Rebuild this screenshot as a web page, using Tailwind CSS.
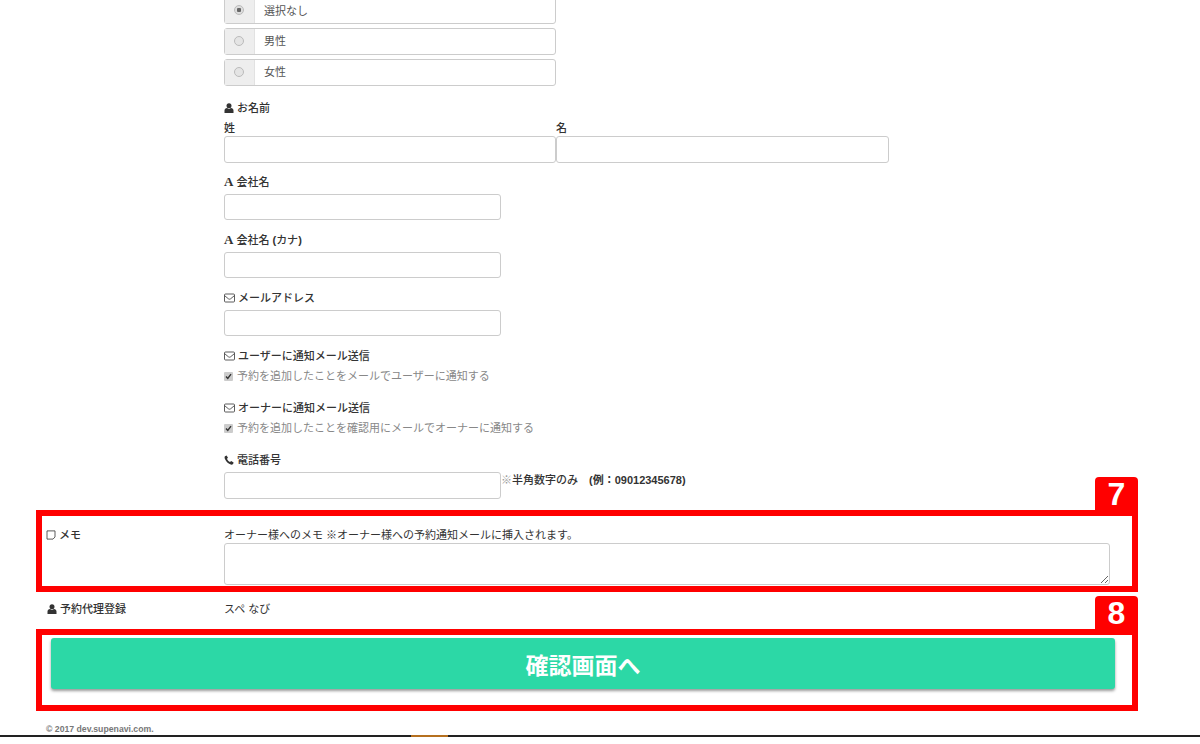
<!DOCTYPE html>
<html lang="ja">
<head>
    <meta charset="UTF-8">
    <meta name="viewport" content="width=device-width, initial-scale=1.0">
    <title>予約登録</title>
    <script src="https://cdn.jsdelivr.net/npm/@tailwindcss/browser@4"></script>
</head>
<body class="bg-white">
<div class="h-[744px] overflow-hidden flex flex-col text-[11px] leading-[14px] text-[#333] font-['Liberation_Sans','Noto_Sans_CJK_JP',sans-serif]">

    <!-- 予約フォーム上部 -->
    <div class="pl-[224px] -mt-[3px]">
        <div class="w-[332px] flex flex-col gap-1">
            <label class="flex h-[27px] border border-[#ccc] rounded-[3px]">
                <span class="w-[30px] pr-[1px] pb-[2px] flex items-center justify-center bg-[#eee] border-r border-[#e2e2e2]"><input type="radio" name="sex" checked disabled class="appearance-none w-[10px] h-[10px] rounded-full border border-[#bbb] bg-[radial-gradient(circle,#666_35%,#ddd_45%)]"></span>
                <span class="pl-[9px] flex items-center text-[#555]">選択なし</span>
            </label>
            <label class="flex h-[27px] border border-[#ccc] rounded-[3px]">
                <span class="w-[30px] pr-[1px] pb-[2px] flex items-center justify-center bg-[#eee] border-r border-[#e2e2e2]"><input type="radio" name="sex" disabled class="appearance-none w-[10px] h-[10px] rounded-full border border-[#bbb] bg-[#e4e4e4]"></span>
                <span class="pl-[9px] pb-[2px] flex items-center text-[#555]">男性</span>
            </label>
            <label class="flex h-[27px] border border-[#ccc] rounded-[3px]">
                <span class="w-[30px] pr-[1px] pb-[2px] flex items-center justify-center bg-[#eee] border-r border-[#e2e2e2]"><input type="radio" name="sex" disabled class="appearance-none w-[10px] h-[10px] rounded-full border border-[#bbb] bg-[#e4e4e4]"></span>
                <span class="pl-[9px] pb-[2px] flex items-center text-[#555]">女性</span>
            </label>
        </div>

        <div class="mt-[15px] font-medium flex items-center gap-[3px] h-[14px]">
            <svg class="w-[10px] h-[10px]" viewBox="0 0 10 10" fill="#333"><circle cx="5" cy="2.8" r="2.5"/><path d="M0.5 10V7.6C0.5 6 1.6 5 3 5L5 6 7 5C8.4 5 9.5 6 9.5 7.6V10Z"/></svg>
            お名前
        </div>
        <div class="mt-[6px] flex w-[665px]">
            <div class="w-[332px]">
                <label class="block font-medium h-[15px]">姓</label>
                <input type="text" class="block w-full h-[27px] border border-[#ccc] rounded-[3px]">
            </div>
            <div class="w-[333px]">
                <label class="block font-medium h-[15px]">名</label>
                <input type="text" class="block w-full h-[27px] border border-[#ccc] rounded-[3px]">
            </div>
        </div>

        <div class="mt-[12px] font-medium flex items-center gap-[3px] h-[14px]">
            <span class="text-[13px] font-bold font-['Liberation_Serif',serif]">A</span>会社名
        </div>
        <input type="text" class="block mt-[5px] w-[277px] h-[26px] border border-[#ccc] rounded-[3px]">

        <div class="mt-[13px] font-medium flex items-center gap-[3px] h-[14px]">
            <span class="text-[13px] font-bold font-['Liberation_Serif',serif]">A</span><span>会社名 <span class="font-bold">(</span>カナ<span class="font-bold">)</span></span>
        </div>
        <input type="text" class="block mt-[5px] w-[277px] h-[26px] border border-[#ccc] rounded-[3px]">

        <div class="mt-[13px] font-medium flex items-center gap-[3px] h-[14px]">
            <svg class="w-[11px] h-[10px]" viewBox="0 0 11 10" fill="none" stroke="#333" stroke-width="0.8"><rect x="0.5" y="1" width="10" height="8" rx="1"/><path d="M0.8 2.8L4.4 5.8Q5.5 6.6 6.6 5.8L10.2 2.8"/></svg>
            メールアドレス
        </div>
        <input type="text" class="block mt-[5px] w-[277px] h-[26px] border border-[#ccc] rounded-[3px]">

        <div class="mt-[13px] font-medium flex items-center gap-[3px] h-[14px]">
            <svg class="w-[11px] h-[10px]" viewBox="0 0 11 10" fill="none" stroke="#333" stroke-width="0.8"><rect x="0.5" y="1" width="10" height="8" rx="1"/><path d="M0.8 2.8L4.4 5.8Q5.5 6.6 6.6 5.8L10.2 2.8"/></svg>
            ユーザーに通知メール送信
        </div>
        <div class="mt-[6px] flex items-center gap-[4px] h-[14px] text-[#888]">
            <svg class="w-[9px] h-[9px]" viewBox="0 0 9 9"><rect width="9" height="9" rx="1" fill="#ccc"/><path d="M2 4.5L3.8 6.5 7 2.2" fill="none" stroke="#333" stroke-width="1.4"/></svg>
            予約を追加したことをメールでユーザーに通知する
        </div>

        <div class="mt-[18px] font-medium flex items-center gap-[3px] h-[14px]">
            <svg class="w-[11px] h-[10px]" viewBox="0 0 11 10" fill="none" stroke="#333" stroke-width="0.8"><rect x="0.5" y="1" width="10" height="8" rx="1"/><path d="M0.8 2.8L4.4 5.8Q5.5 6.6 6.6 5.8L10.2 2.8"/></svg>
            オーナーに通知メール送信
        </div>
        <div class="mt-[6px] flex items-center gap-[4px] h-[14px] text-[#888]">
            <svg class="w-[9px] h-[9px]" viewBox="0 0 9 9"><rect width="9" height="9" rx="1" fill="#ccc"/><path d="M2 4.5L3.8 6.5 7 2.2" fill="none" stroke="#333" stroke-width="1.4"/></svg>
            予約を追加したことを確認用にメールでオーナーに通知する
        </div>

        <div class="mt-[18px] font-medium flex items-center gap-[3px] h-[14px]">
            <svg class="w-[10px] h-[10px]" viewBox="0 0 10 10" fill="#333"><path d="M2.6 0.5L1 1.2C0.4 1.6 0.4 3 1.2 4.6 2.4 7 4.6 9 6.8 9.6 8 9.9 8.9 9.4 9.4 8.2L9.6 7.6 7.2 6 6 7C4.8 6.6 3.4 5 3 3.8L4 2.8Z"/></svg>
            電話番号
        </div>
        <div class="mt-[5px] flex items-center">
            <input type="text" class="block w-[277px] h-[27px] border border-[#ccc] rounded-[3px]">
            <span class="font-medium -mt-[12px]"><span class="font-normal text-[#999]">※</span>半角数字のみ　<span class="font-bold">(例：09012345678)</span></span>
        </div>
    </div>

    <!-- 7 メモ -->
    <div class="relative mt-[11px] ml-[36px] w-[1102px] h-[82px] border-[6px] border-[#f00] flex">
        <span class="absolute -top-[39px] -right-[6px] w-[43px] h-[34px] rounded-t-[4px] bg-[#f00] text-white text-[32px] leading-[34px] font-bold text-center font-['Liberation_Sans',sans-serif]">7</span>
        <div class="w-[182px] pl-[4px] pt-[12px] font-medium flex items-start gap-[3px]">
            <svg class="w-[10px] h-[10px] mt-[2px]" viewBox="0 0 10 10" fill="none" stroke="#333" stroke-width="0.8"><path d="M1 0.9H9V7L7 9.1H1Z"/></svg>
            メモ
        </div>
        <div class="flex-1 pt-[12px]">
            <div class="h-[15px]">オーナー様へのメモ ※オーナー様への予約通知メールに挿入されます。</div>
            <textarea class="block w-[886px] h-[42px] border border-[#ccc] rounded-[3px]"></textarea>
        </div>
    </div>

    <!-- 予約代理登録 -->
    <div class="ml-[47px] h-[37px] pb-[3px] flex items-center">
        <div class="w-[177px] font-medium flex items-center gap-[3px]">
            <svg class="w-[10px] h-[10px]" viewBox="0 0 10 10" fill="#333"><circle cx="5" cy="2.8" r="2.5"/><path d="M0.5 10V7.6C0.5 6 1.6 5 3 5L5 6 7 5C8.4 5 9.5 6 9.5 7.6V10Z"/></svg>
            予約代理登録
        </div>
        <div>スペ なび</div>
    </div>

    <!-- 8 確認ボタン -->
    <div class="relative ml-[36px] w-[1102px] h-[82px] border-[6px] border-[#f00] pl-[9px] pt-[3px]">
        <span class="absolute -top-[39px] -right-[6px] w-[43px] h-[34px] rounded-t-[4px] bg-[#f00] text-white text-[32px] leading-[34px] font-bold text-center font-['Liberation_Sans',sans-serif]">8</span>
        <button class="w-[1064px] h-[51px] pt-[4px] rounded-[3px] bg-[#2cd8a6] text-white text-[23px] font-bold shadow-[0_2px_3px_rgba(0,0,0,0.4)]">確認画面へ</button>
    </div>

    <!-- フッター -->
    <div class="pl-[46px] mt-[13px] text-[8.7px] leading-[11px] font-bold text-[#777]">© 2017 dev.supenavi.com.</div>
    <div class="relative h-[2px] bg-[#222]">
        <span class="absolute top-0 left-[411px] w-[37px] h-[2px] bg-[#b5701f]"></span>
    </div>
</div>
</body>
</html>
